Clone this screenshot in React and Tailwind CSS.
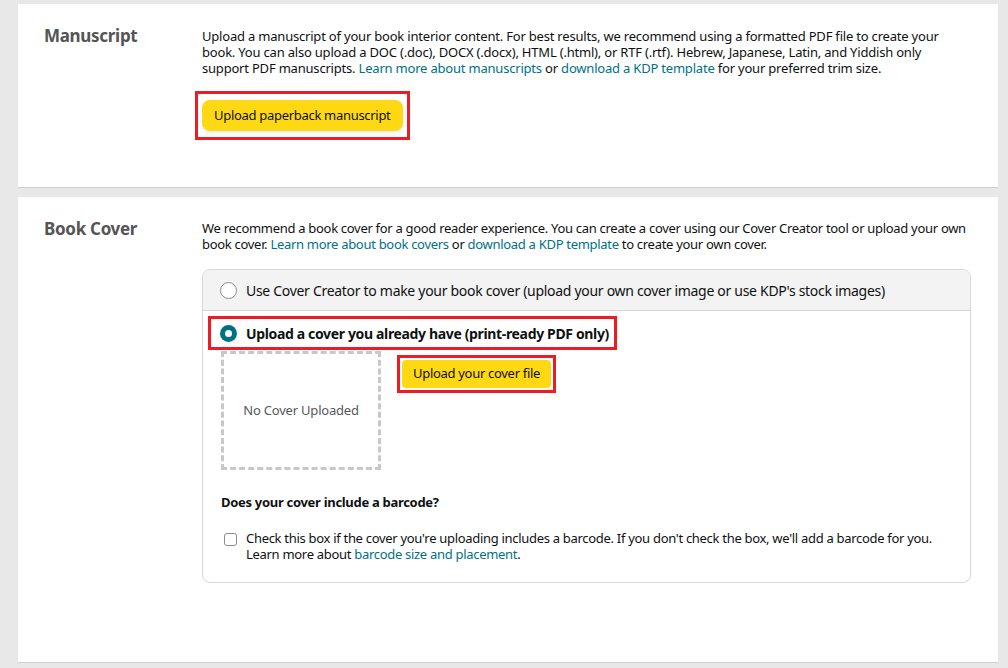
export default function App() {
  const font = { fontFamily: '"Noto Sans", "Open Sans", sans-serif' }
  return (
    <div className="min-h-[668px] bg-[#e8e8e8] pt-[4px] pl-[18px] pr-[10px] tracking-[-0.2px]" style={font}>
      {/* Manuscript */}
      <div className="bg-white border-b border-[#d0d0d0] h-[184px] flex">
        <div className="w-[184px] shrink-0 pl-[26px] pt-[21px]">
          <h2 className="text-[17px] font-bold text-[#555555] leading-[22px] tracking-[-0.3px]">Manuscript</h2>
        </div>
        <div className="flex-1 pt-[24px] pr-[30px]">
          <p className="text-[13px] leading-[16px] text-[#0f1111]">
            Upload a manuscript of your book interior content. For best results, we recommend using a formatted PDF file to create your book. You can also upload a DOC (.doc), DOCX (.docx), HTML (.html), or RTF (.rtf). Hebrew, Japanese, Latin, and Yiddish only support PDF manuscripts.{' '}
            <a className="text-[#007185]">Learn more about manuscripts</a> or{' '}
            <a className="text-[#007185]">download a KDP template</a> for your preferred trim size.
          </p>
          <div className="mt-[15px] -ml-[7px] inline-block border-[3px] border-[#ed1c24] px-[4px] py-[6px]">
            <button className="h-[31px] px-[12px] rounded-[8px] bg-[#ffd814] text-[13px] text-[#0f1111] tracking-[-0.3px] shadow-[0_2px_5px_rgba(213,217,217,0.5)]">
              Upload paperback manuscript
            </button>
          </div>
        </div>
      </div>

      {/* Book Cover */}
      <div className="mt-[9px] bg-white border-b border-[#d0d0d0] h-[466px] flex">
        <div className="w-[184px] shrink-0 pl-[26px] pt-[21px]">
          <h2 className="text-[17px] font-bold text-[#555555] leading-[22px] tracking-[-0.3px]">Book Cover</h2>
        </div>
        <div className="flex-1 pt-[23px] pr-[27px]">
          <p className="text-[13px] leading-[16px] text-[#0f1111] tracking-[-0.3px] -mr-[4px]">
            We recommend a book cover for a good reader experience. You can create a cover using our Cover Creator tool or upload your own book cover.{' '}
            <a className="text-[#007185]">Learn more about book covers</a> or{' '}
            <a className="text-[#007185]">download a KDP template</a> to create your own cover.
          </p>
          <div className="mt-[17px] border border-[#d5d9d9] rounded-[8px] overflow-hidden">
            <div className="h-[41px] bg-[#f3f3f3] border-b border-[#d5d9d9] flex items-center pl-[17px]">
              <span className="w-[17px] h-[17px] rounded-full border border-[#888c8c] bg-white shrink-0" />
              <span className="ml-[9px] text-[14px] text-[#0f1111] tracking-[-0.3px]">
                Use Cover Creator to make your book cover (upload your own cover image or use KDP's stock images)
              </span>
            </div>
            <div className="pl-[5px] pt-[5px]">
              <div className="inline-flex items-center border-[3px] border-[#ed1c24] h-[34px] pl-[9px] pr-[5px]">
                <span className="w-[17px] h-[17px] rounded-full bg-[#007185] flex items-center justify-center shrink-0">
                  <span className="w-[7px] h-[7px] rounded-full bg-white" />
                </span>
                <span className="ml-[9px] text-[14px] font-bold text-[#0f1111] tracking-[-0.35px]">
                  Upload a cover you already have (print-ready PDF only)
                </span>
              </div>
            </div>
            <div className="flex pl-[18px] pt-[1px]">
              <div className="w-[160px] h-[119px] border-[3px] border-dashed border-[#c8c8c8] flex items-center justify-center">
                <span className="text-[13px] text-[#565959]">No Cover Uploaded</span>
              </div>
              <div className="ml-[16px] mt-[4px] self-start border-[3px] border-[#ed1c24] p-[2px]">
                <button className="h-[28px] px-[11px] rounded-[4px] bg-[#ffd814] text-[13px] text-[#0f1111] tracking-[-0.3px]">
                  Upload your cover file
                </button>
              </div>
            </div>
            <div className="pl-[18px] pt-[24px]">
              <p className="text-[13px] font-bold text-[#0f1111] leading-[16px] tracking-[-0.3px]">Does your cover include a barcode?</p>
              <div className="flex mt-[20px] pb-[20px]">
                <span className="mt-[3px] ml-[3px] w-[13px] h-[13px] border border-[#888c8c] rounded-[3px] bg-white shrink-0" />
                <p className="ml-[9px] text-[13px] leading-[16px] text-[#0f1111] tracking-[-0.3px]">
                  Check this box if the cover you're uploading includes a barcode. If you don't check the box, we'll add a barcode for you.
                  <br />
                  Learn more about <a className="text-[#007185]">barcode size and placement</a>.
                </p>
              </div>
            </div>
          </div>
        </div>
      </div>
    </div>
  )
}
